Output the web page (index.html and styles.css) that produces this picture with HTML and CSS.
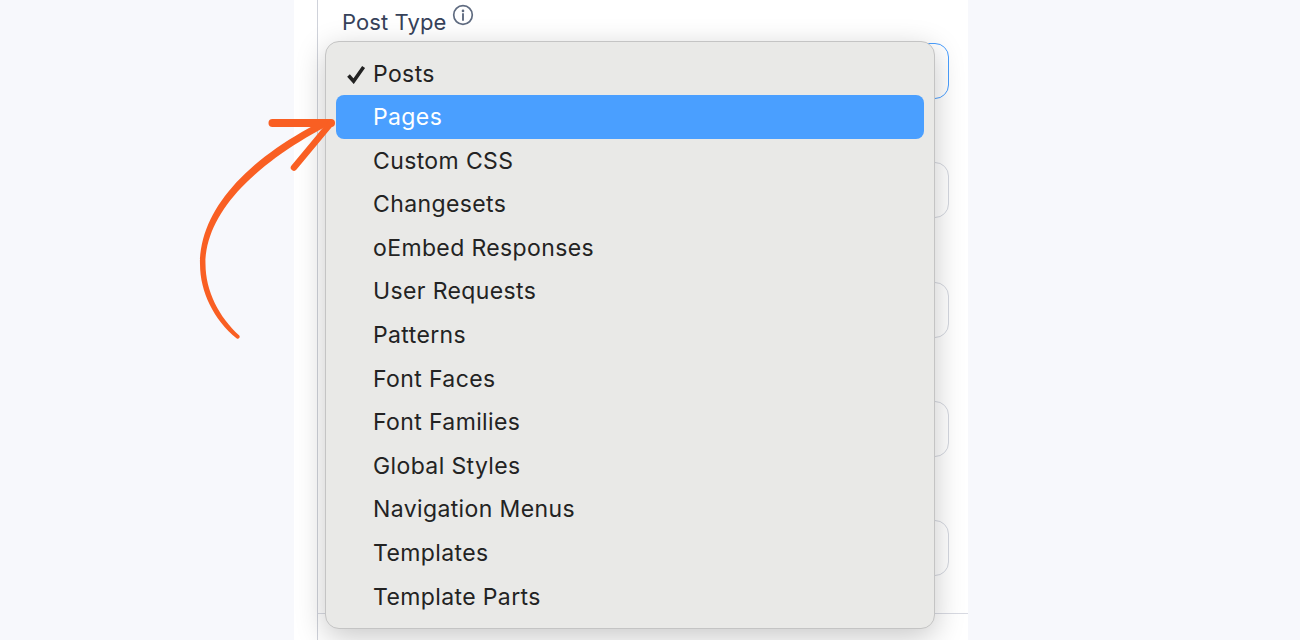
FILE: index.html
```html
<!DOCTYPE html>
<html lang="en">
<head>
<meta charset="utf-8">
<title>Post Type</title>
<link rel="stylesheet" href="styles.css">
</head>
<body>
<main class="panel">
  <section class="form">
    <div class="label-row">
      <label class="label">Post Type</label>
      <svg class="info" viewBox="0 0 22 22" width="22" height="22" aria-hidden="true">
        <circle cx="11" cy="11" r="9.300" fill="none" stroke="#5f6b80" stroke-width="1.700"/>
        <circle cx="11" cy="6.900" r="1.300" fill="#5f6b80"/>
        <path d="M11 10v6" fill="none" stroke="#5f6b80" stroke-width="1.900" stroke-linecap="round"/>
      </svg>
    </div>
    <div class="fields">
      <div class="field field-focus"></div>
      <div class="field"></div>
      <div class="field"></div>
      <div class="field"></div>
      <div class="field"></div>
    </div>
    <div class="rule"></div>
  </section>
  <ul class="menu">
    <li class="item">
      <svg class="check" viewBox="0 0 20 20" width="20" height="20" aria-hidden="true">
        <path d="M2.500 11.500 7.600 17.200 17.600 3" fill="none" stroke="#222" stroke-width="3.600"/>
      </svg>
      Posts
    </li>
    <li class="item item-active">Pages</li>
    <li class="item">Custom CSS</li>
    <li class="item">Changesets</li>
    <li class="item">oEmbed Responses</li>
    <li class="item">User Requests</li>
    <li class="item">Patterns</li>
    <li class="item">Font Faces</li>
    <li class="item">Font Families</li>
    <li class="item">Global Styles</li>
    <li class="item">Navigation Menus</li>
    <li class="item">Templates</li>
    <li class="item">Template Parts</li>
  </ul>
</main>
<svg class="arrow" viewBox="0 0 1300 640" width="1300" height="640" aria-hidden="true">
  <path d="M236.800 338.500C214 320 200 292 200 264C200 210 246 160 322 121L326 126.500C252 166 205.500 214 205.500 264C205.500 291 219 317 239.300 335.500A2 2 0 0 1 236.800 338.500Z" fill="#f95f23"/>
  <path d="M272.500 123H331" fill="none" stroke="#f95f23" stroke-width="8" stroke-linecap="round"/>
  <path d="M331 123 294 167.500" fill="none" stroke="#f95f23" stroke-width="6.500" stroke-linecap="round"/>
</svg>
</body>
</html>
```
FILE: styles.css
```css
* {
  box-sizing: border-box;
}

html,
body {
  margin: 0;
  height: 100%;
  overflow: hidden;
}

body {
  background: #f7f8fc;
  font-family: Inter, "Liberation Sans", sans-serif;
  display: flex;
  justify-content: center;
}

.panel {
  position: relative;
  width: 674px;
  height: 640px;
  margin-left: -38px;
  background: #fff;
  padding-left: 23px;
}

.form {
  height: 100%;
  border-left: 1px solid #cfd2da;
  padding-left: 24px;
  display: flex;
  flex-direction: column;
}

.label-row {
  display: flex;
  align-items: flex-start;
  gap: 5px;
  height: 43px;
  padding-top: 4px;
}

.label {
  font-size: 22px;
  line-height: 36px;
  letter-spacing: 0.1px;
  color: #37425a;
}

.info {
  flex: none;
}

.fields {
  display: flex;
  flex-direction: column;
  gap: 63.250px;
  padding-right: 19px;
}

.field {
  height: 56px;
  border: 1px solid #d5d8e0;
  border-radius: 14px;
  background: #fff;
}

.field-focus {
  border-color: #4a9fff;
}

.rule {
  margin-top: 37px;
  margin-left: -24px;
  height: 1px;
  background: #d8dae2;
}

.menu {
  position: absolute;
  left: 31px;
  top: 41px;
  width: 610px;
  height: 588px;
  margin: 0;
  padding: 9.500px 10px 0;
  list-style: none;
  background: #e9e9e7;
  border: 1px solid #c4c4c4;
  border-radius: 14px;
  box-shadow: 0 8px 30px rgba(0, 0, 0, 0.22);
}

.item {
  position: relative;
  height: 43.600px;
  padding-left: 37px;
  border-radius: 8px;
  font-size: 23px;
  line-height: 44px;
  letter-spacing: 0.38px;
  color: #232323;
}

.item-active {
  background: #4a9fff;
  color: #fff;
}

.check {
  position: absolute;
  left: 10px;
  top: 12px;
}

.arrow {
  position: fixed;
  left: 0;
  top: 0;
  pointer-events: none;
}
```
